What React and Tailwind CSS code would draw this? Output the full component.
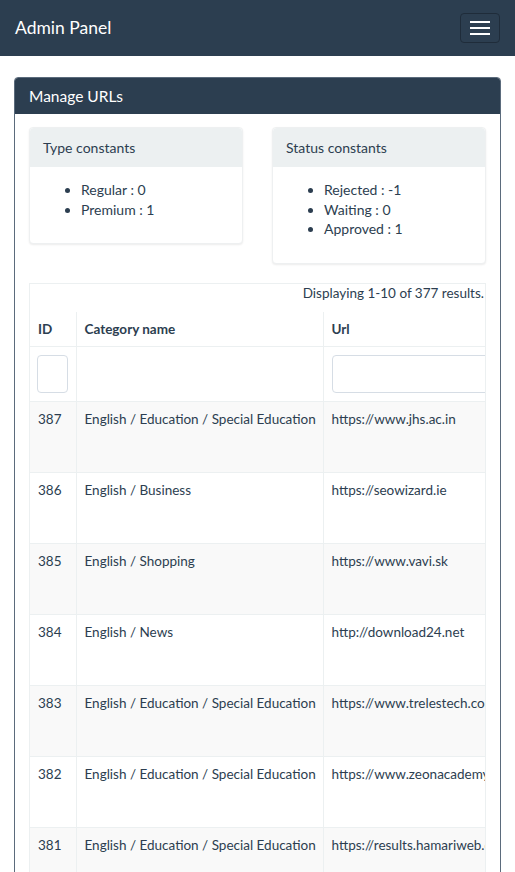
import React from 'react';

const rows = [
  { id: 387, category: 'English / Education / Special Education', url: 'https://www.jhs.ac.in' },
  { id: 386, category: 'English / Business', url: 'https://seowizard.ie' },
  { id: 385, category: 'English / Shopping', url: 'https://www.vavi.sk' },
  { id: 384, category: 'English / News', url: 'http://download24.net' },
  { id: 383, category: 'English / Education / Special Education', url: 'https://www.trelestech.com' },
  { id: 382, category: 'English / Education / Special Education', url: 'https://www.zeonacademy.com' },
  { id: 381, category: 'English / Education / Special Education', url: 'https://results.hamariweb.com' },
  { id: 380, category: 'English / Business', url: 'https://example.com' },
];

const ConstantsCard = ({ title, items }) => (
  <div className="rounded-[4px] border border-[#eef0f1] bg-white shadow-[0_1px_2px_rgba(0,0,0,0.08)]">
    <div className="h-[39px] rounded-t-[4px] bg-[#ecf0f1] px-[13px] text-[14px] leading-[39px]">{title}</div>
    <div className="px-[12px] pb-[11px] pt-[13px]">
      <ul className="mb-[13px] list-disc pl-[39px] text-[14px] leading-[19.5px]">
        {items.map((item) => (
          <li key={item}>{item}</li>
        ))}
      </ul>
    </div>
  </div>
);

const App = () => {
  return (
    <div className="min-h-screen bg-white font-['Lato','Liberation_Sans',sans-serif] text-[#2c3e50]">
      {/* Navbar */}
      <nav className="flex h-[56px] items-center justify-between bg-[#2c3e50] pl-[15px] pr-[15px]">
        <span className="text-[17.5px] text-white">Admin Panel</span>
        <button
          className="flex h-[30px] w-[40px] flex-col items-center justify-center gap-[4px] rounded-[4px] border border-[#1f2c3a]"
          aria-label="Toggle navigation"
        >
          <span className="h-[2px] w-[20px] bg-white" />
          <span className="h-[2px] w-[20px] bg-white" />
          <span className="h-[2px] w-[20px] bg-white" />
        </button>
      </nav>

      <div className="px-[14px] pt-[21px]">
        <div className="rounded-[4px] border border-[#5b6b7c]">
          <div className="h-[36px] rounded-t-[3px] bg-[#2c3e50] px-[14px] text-[15.5px] leading-[36px] text-white">
            Manage URLs
          </div>
          <div className="px-[14px] pt-[13px]">
            <div className="grid grid-cols-2 items-start gap-[29px]">
              <ConstantsCard title="Type constants" items={['Regular : 0', 'Premium : 1']} />
              <ConstantsCard title="Status constants" items={['Rejected : -1', 'Waiting : 0', 'Approved : 1']} />
            </div>

            {/* Grid view */}
            <div className="mt-[19px] overflow-hidden border-x border-t border-[#ecf0f1]">
              <div className="h-[28px] pr-[1px] text-right text-[13.5px] leading-[18px]">
                Displaying 1-10 of 377 results.
              </div>
              <table className="w-[760px] table-fixed border-collapse text-[13.5px] leading-[20px]">
                <colgroup>
                  <col className="w-[46px]" />
                  <col className="w-[247px]" />
                  <col className="w-[260px]" />
                  <col className="w-[100px]" />
                  <col className="w-[107px]" />
                </colgroup>
                <thead>
                  <tr className="h-[35px]">
                    <th className="border-b border-[#ecf0f1] px-[8px] text-left font-bold">ID</th>
                    <th className="border-b border-l border-[#ecf0f1] px-[8px] text-left font-bold">Category name</th>
                    <th className="border-b border-l border-[#ecf0f1] px-[8px] text-left font-bold">Url</th>
                    <th className="border-b border-l border-[#ecf0f1] px-[8px] text-left font-bold">Type</th>
                    <th className="border-b border-l border-[#ecf0f1] px-[8px] text-left font-bold">Status</th>
                  </tr>
                  <tr className="h-[55px]">
                    <td className="border-b border-[#ecf0f1] px-[7px] py-[8px]">
                      <input className="h-[38px] w-[31px] rounded-[4px] border border-[#d6dde5] bg-white" />
                    </td>
                    <td className="border-b border-l border-[#ecf0f1]" />
                    <td className="border-b border-l border-[#ecf0f1] px-[8px] py-[8px]">
                      <input className="h-[38px] w-full rounded-[4px] border border-[#d6dde5] bg-white" />
                    </td>
                    <td className="border-b border-l border-[#ecf0f1] px-[8px] py-[8px]">
                      <input className="h-[38px] w-full rounded-[4px] border border-[#d6dde5] bg-white" />
                    </td>
                    <td className="border-b border-l border-[#ecf0f1] px-[8px] py-[8px]">
                      <input className="h-[38px] w-full rounded-[4px] border border-[#d6dde5] bg-white" />
                    </td>
                  </tr>
                </thead>
                <tbody>
                  {rows.map((row, i) => (
                    <tr key={row.id} className={`h-[71px] ${i % 2 === 0 ? 'bg-[#f9f9f9]' : 'bg-white'}`}>
                      <td className="border-b border-[#ecf0f1] px-[8px] pt-[7px] align-top">{row.id}</td>
                      <td className="whitespace-nowrap border-b border-l border-[#ecf0f1] px-[8px] pt-[7px] align-top">{row.category}</td>
                      <td className="whitespace-nowrap border-b border-l border-[#ecf0f1] px-[8px] pt-[7px] align-top">{row.url}</td>
                      <td className="border-b border-l border-[#ecf0f1] px-[8px] pt-[7px] align-top">Regular</td>
                      <td className="border-b border-l border-[#ecf0f1] px-[8px] pt-[7px] align-top">Approved</td>
                    </tr>
                  ))}
                </tbody>
              </table>
            </div>
          </div>
        </div>
      </div>
    </div>
  );
};

export default App;
